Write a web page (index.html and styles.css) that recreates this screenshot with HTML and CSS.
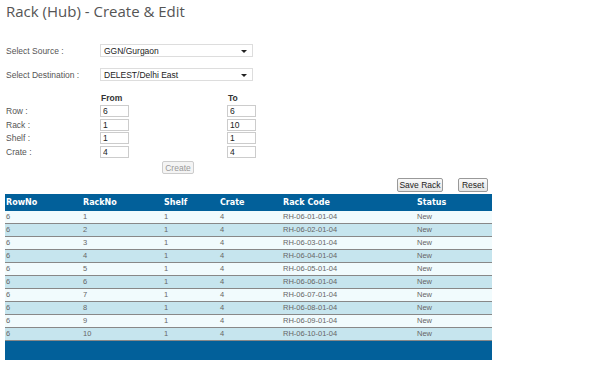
FILE: index.html
```html
<!DOCTYPE html>
<html lang="en">

<head>
    <meta charset="UTF-8" />
    <meta name="viewport" content="width=device-width, initial-scale=1.0" />
    <title>Rack (Hub) - Create &amp; Edit</title>
    <link rel="stylesheet" href="styles.css">
</head>

<body>

    <h2 class="page-title">Rack (Hub) - Create &amp; Edit</h2>

    <div class="select-row source-row">
        <label class="field-label">Select Source :</label>
        <div class="select-box">
            <span class="select-text">GGN/Gurgaon</span>
            <span class="select-arrow"></span>
        </div>
    </div>

    <div class="select-row dest-row">
        <label class="field-label">Select Destination :</label>
        <div class="select-box">
            <span class="select-text">DELEST/Delhi East</span>
            <span class="select-arrow"></span>
        </div>
    </div>

    <div class="range-grid">
        <span></span>
        <span class="range-head">From</span>
        <span class="range-head">To</span>

        <span class="field-label">Row :</span>
        <input class="range-input" type="text" value="6">
        <input class="range-input" type="text" value="6">

        <span class="field-label">Rack :</span>
        <input class="range-input" type="text" value="1">
        <input class="range-input" type="text" value="10">

        <span class="field-label">Shelf :</span>
        <input class="range-input" type="text" value="1">
        <input class="range-input" type="text" value="1">

        <span class="field-label">Crate :</span>
        <input class="range-input" type="text" value="4">
        <input class="range-input" type="text" value="4">
    </div>

    <div class="create-row">
        <button class="plain-btn create-btn" disabled>Create</button>
    </div>

    <div class="action-row">
        <button class="plain-btn save-btn">Save Rack</button>
        <button class="plain-btn reset-btn">Reset</button>
    </div>

    <table class="rack-table">
        <thead>
            <tr>
                <th class="col-row">RowNo</th>
                <th class="col-rack">RackNo</th>
                <th class="col-shelf">Shelf</th>
                <th class="col-crate">Crate</th>
                <th class="col-code">Rack Code</th>
                <th class="col-status">Status</th>
            </tr>
        </thead>
        <tbody id="rack-body"></tbody>
        <tfoot>
            <tr>
                <td colspan="6"></td>
            </tr>
        </tfoot>
    </table>

    <script>
        const body = document.getElementById('rack-body');

        for (let i = 1; i <= 10; i++) {
            const rack = String(i).padStart(2, '0');
            const tr = document.createElement('tr');
            tr.innerHTML = `<td>6</td><td>${i}</td><td>1</td><td>4</td><td>RH-06-${rack}-01-04</td><td>New</td>`;
            body.appendChild(tr);
        }
    </script>

</body>

</html>
```

FILE: styles.css
```css
body {
    margin: 0;
    padding: 0 5px;
    font-family: "Liberation Sans", Arial, sans-serif;
    background-color: #fff;
    color: #555;
}

.page-title {
    margin: 0 0 0 1px;
    padding-top: 1px;
    font-family: "Open Sans", sans-serif;
    font-weight: normal;
    font-size: 15px;
    line-height: 20px;
    color: #555;
}

.field-label {
    font-size: 8.5px;
    color: #555;
}

.select-row {
    display: flex;
    align-items: center;
    padding-left: 1px;
}

.select-row .field-label {
    width: 94px;
}

.source-row {
    margin-top: 23px;
}

.dest-row {
    margin-top: 11px;
}

.select-box {
    position: relative;
    width: 151px;
    height: 11px;
    border: 1px solid #ddd;
    box-sizing: content-box;
    display: flex;
    align-items: center;
    background-color: #fff;
}

.select-text {
    padding-left: 3px;
    font-size: 8.5px;
    color: #222;
}

.select-arrow {
    position: absolute;
    right: 5px;
    top: 5px;
    border-left: 3px solid transparent;
    border-right: 3px solid transparent;
    border-top: 3px solid #222;
}

.range-grid {
    display: grid;
    grid-template-columns: 94px 127px 30px;
    grid-auto-rows: 13.5px;
    align-items: center;
    margin-top: 10px;
    padding-left: 1px;
}

.range-head {
    font-size: 8.5px;
    font-weight: bold;
    color: #333;
    padding-left: 1px;
}

.range-input {
    width: 29px;
    height: 12px;
    margin: 0;
    padding: 0 2px;
    box-sizing: border-box;
    border: 1px solid #ccc;
    font-family: "Liberation Sans", Arial, sans-serif;
    font-size: 8.5px;
    color: #222;
    outline: none;
}

.create-row {
    display: flex;
    padding-left: 157px;
    margin-top: 2px;
}

.plain-btn {
    height: 14px;
    padding: 0;
    margin: 0;
    border: 1px solid #999;
    border-radius: 2px;
    background: linear-gradient(#fafafa, #e4e4e4);
    font-family: "Liberation Sans", Arial, sans-serif;
    font-size: 8.5px;
    line-height: 12px;
    color: #222;
    white-space: nowrap;
}

.create-btn {
    width: 32px;
    height: 13px;
    border-color: #ccc;
    color: #999;
    background: #f4f4f4;
}

.action-row {
    display: flex;
    gap: 15px;
    justify-content: flex-end;
    width: 483px;
    margin-top: 4px;
}

.save-btn {
    width: 46px;
}

.reset-btn {
    width: 30px;
}

.rack-table {
    width: 487px;
    margin-top: 2px;
    border-collapse: collapse;
    table-layout: fixed;
}

.rack-table th {
    height: 17px;
    padding: 0 1px;
    text-align: left;
    background-color: #02609a;
    color: #fff;
    font-family: "DejaVu Sans", Verdana, sans-serif;
    font-size: 8px;
    font-weight: bold;
}

.col-row { width: 75px; }
.col-rack { width: 79px; }
.col-shelf { width: 54px; }
.col-crate { width: 61px; }
.col-code { width: 132px; }

.rack-table td {
    height: 12px;
    padding: 0 1px;
    font-size: 7.5px;
    color: #666;
    border-top: 1px solid #888;
    border-bottom: 1px solid #888;
}

.rack-table tbody tr:nth-child(odd) td {
    background-color: #f1fbfd;
}

.rack-table tbody tr:nth-child(even) td {
    background-color: #c6e5ee;
}

.rack-table tbody tr:first-child td {
    border-top: none;
}

.rack-table tfoot td {
    height: 19px;
    padding: 0;
    background-color: #02609a;
    border: none;
}
```
